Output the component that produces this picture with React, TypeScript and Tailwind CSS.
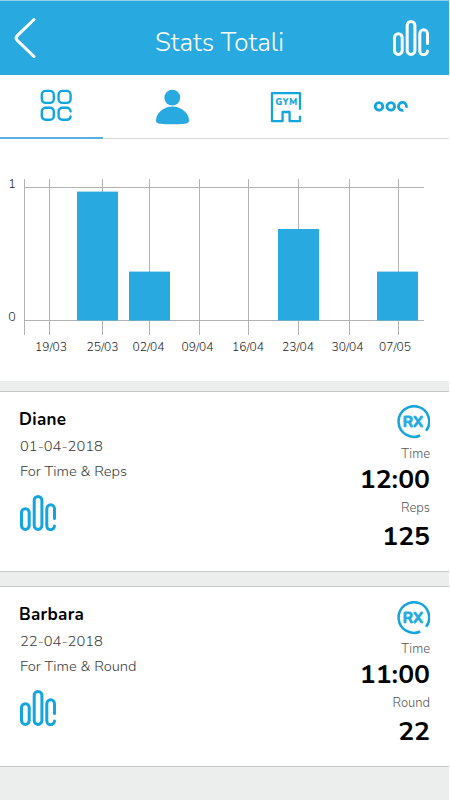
const BLUE = "#28a9df";
const STROKE = "#14a4de";

type Workout = {
  name: string;
  date: string;
  type: string;
  time: string;
  scoreLabel: string;
  score: string;
};

const WORKOUTS: Workout[] = [
  {
    name: "Diane",
    date: "01-04-2018",
    type: "For Time & Reps",
    time: "12:00",
    scoreLabel: "Reps",
    score: "125",
  },
  {
    name: "Barbara",
    date: "22-04-2018",
    type: "For Time & Round",
    time: "11:00",
    scoreLabel: "Round",
    score: "22",
  },
];

const WEEKS = [
  { label: "19/03", line: 49, text: 51 },
  { label: "25/03", line: 102, text: 102.5, bar: 77, top: 191.6 },
  { label: "02/04", line: 149, text: 148.5, bar: 129, top: 271.6 },
  { label: "09/04", line: 199, text: 197.5 },
  { label: "16/04", line: 248, text: 248 },
  { label: "23/04", line: 298, text: 298, bar: 278, top: 229 },
  { label: "30/04", line: 349, text: 347.5 },
  { label: "07/05", line: 398, text: 395, bar: 377, top: 271.6 },
];

function Logo({ color = STROKE }: { color?: string }) {
  return (
    <svg width="37" height="36" fill="none" stroke={color} strokeWidth="3" strokeLinecap="round">
      <rect x="1.5" y="13.8" width="7.7" height="20.6" rx="3.85" />
      <rect x="14.2" y="1.5" width="7.7" height="32.9" rx="3.85" />
      <path d="M34.5 23.5V13.7a3.85 3.85 0 0 0-7.7 0v16.9a3.85 3.85 0 0 0 7.7.4" />
    </svg>
  );
}

function RxIcon() {
  return (
    <svg width="34" height="34" fill="none">
      <path
        d="M24.2 30.5A15.3 15.3 0 1 1 30.1 25.8"
        stroke={STROKE}
        strokeWidth="2.5"
      />
      <text
        x="6.8"
        y="22"
        fontSize="15.5"
        fontWeight="700"
        fill={BLUE}
        stroke={BLUE}
        strokeWidth="0.9"
        strokeLinejoin="round"
        textLength="20.4"
        lengthAdjust="spacingAndGlyphs"
      >
        RX
      </text>
    </svg>
  );
}

function Header() {
  return (
    <header className="grid h-[75px] grid-cols-[155px_1fr_57px] items-center border-t border-[#94cfe9] bg-[#28a9df] text-white">
      <svg width="40" height="50" className="ml-[5px]" fill="none" stroke="white" strokeWidth="3" strokeLinecap="round">
        <path d="M29 6.5 12.3 22.6Q10 25 12.3 27.4L29 43.5" />
      </svg>
      <h1 className="pt-[9px]">
        <svg width="132" height="34" className="block">
          <text
            x="0"
            y="25"
            fontSize="26"
            fontWeight="350"
            fill="white"
            textLength="129"
            lengthAdjust="spacingAndGlyphs"
          >
            Stats Totali
          </text>
        </svg>
      </h1>
      <div className="pl-px">
        <Logo color="white" />
      </div>
    </header>
  );
}

function Tabs() {
  return (
    <nav className="grid h-16 grid-cols-[103px_1fr] border-b border-[#d7d8d8]">
      <div className="-mb-px border-b-2 border-[#55b0de] pt-[14px] pl-10">
        <svg width="33" height="33" fill="none" stroke={STROKE} strokeWidth="2.4" strokeLinecap="round">
          <rect x="1.8" y="1.9" width="12" height="12" rx="3.8" />
          <rect x="18.6" y="1.9" width="12" height="12" rx="3.8" />
          <rect x="1.8" y="18.8" width="12" height="12" rx="3.8" />
          <path d="M30.6 22.4a3.8 3.8 0 0 0-3.8-3.6h-4.4a3.8 3.8 0 0 0-3.8 3.8v4.4a3.8 3.8 0 0 0 3.8 3.8h4.4a3.8 3.8 0 0 0 3.8-3.4" />
        </svg>
      </div>
      <div className="flex items-start pt-[14px] pl-[53px]">
        <svg width="34" height="36" fill={BLUE}>
          <circle cx="16.3" cy="8.7" r="7.9" />
          <path d="M16.4 17.6C7 17.6 0 24.8 0 31.4 0 34.2 2 35.2 16.4 35.2S33 34.2 33 31.4C33 24.8 25.8 17.6 16.4 17.6Z" />
        </svg>
        <svg width="32" height="34" className="ml-[80px]" fill="none" stroke={STROKE} strokeWidth="2.3" strokeLinejoin="round">
          <path d="M30 20.8V4.2H2v28h10.6V23h7v9.2H30v-5.4" />
          <text
            x="5.6"
            y="16.2"
            fontSize="9"
            fontWeight="800"
            fill={STROKE}
            stroke={STROKE}
            strokeWidth="0.2"
            textLength="21.5"
          >
            GYM
          </text>
        </svg>
        <svg width="36" height="14" className="mt-[10px] ml-[71px]" fill="none" stroke={STROKE} strokeWidth="2.8">
          <circle cx="6" cy="7.4" r="3.8" />
          <circle cx="17.8" cy="7.4" r="3.8" />
          <path d="M33.2 8.8a4 4 0 1 0-2.8 2.5" />
        </svg>
      </div>
    </nav>
  );
}

function Chart() {
  return (
    <section className="h-[242px]">
      <svg width="449" height="242" viewBox="0 139 449 242">
        <g stroke="#b2b3b4" strokeWidth="1">
          <path d="M24.5 179V335" />
          <path d="M24 187.5H424M24 320.5H424" />
          {WEEKS.map((w) => (
            <path key={w.label} d={`M${w.line + 0.5} 179V335`} />
          ))}
        </g>
        {WEEKS.map((w) =>
          w.top ? (
            <rect
              key={w.label}
              x={w.bar}
              y={w.top}
              width="41"
              height={320.5 - w.top}
              fill={BLUE}
            />
          ) : null
        )}
        <g fontSize="12.5" fontWeight="350" fill="#1c1c1c" textAnchor="middle">
          <text x="12" y="187.5">1</text>
          <text x="12" y="321">0</text>
          {WEEKS.map((w) => (
            <text
              key={w.label}
              x={w.text}
              y="350.6"
              textLength="32"
              lengthAdjust="spacingAndGlyphs"
            >
              {w.label}
            </text>
          ))}
        </g>
      </svg>
    </section>
  );
}

function WorkoutCard({ workout }: { workout: Workout }) {
  return (
    <article className="group flex h-[181px] justify-between border-y border-[#c5c8c8] bg-white pr-[19px] pl-5">
      <div className="pt-[15px]">
        <h2 className="-ml-px text-[17px] leading-[25px] font-bold tracking-[0.3px] text-black">
          {workout.name}
        </h2>
        <p className="mt-px text-[14.7px] leading-[26px] text-[#3c3c3c]">{workout.date}</p>
        <p className="text-[14.7px] leading-[25px] text-[#3c3c3c]">{workout.type}</p>
        <div className="mt-[11px]">
          <Logo />
        </div>
      </div>
      <div className="flex flex-col items-end pt-[13px] group-last:pt-[14px]">
        <RxIcon />
        <span className="mt-[6px] text-[13px] leading-[18px] text-[#555] group-last:mt-[5px]">Time</span>
        <strong className="mb-1 text-[26.5px] leading-8 font-bold text-black">{workout.time}</strong>
        <span className="text-[13px] leading-[18px] text-[#555]">{workout.scoreLabel}</span>
        <strong className="mt-[3px] text-[26.5px] leading-8 font-bold text-black">{workout.score}</strong>
      </div>
    </article>
  );
}

export default function App() {
  return (
    <div className="h-[800px] w-[450px] overflow-hidden bg-white pr-px font-['Nunito','Noto_Sans',sans-serif] font-light">
      <Header />
      <Tabs />
      <Chart />
      <main className="flex h-[419px] flex-col gap-[14px] bg-[#eceeee] pt-[10px]">
        {WORKOUTS.map((w) => (
          <WorkoutCard key={w.name} workout={w} />
        ))}
      </main>
    </div>
  );
}
